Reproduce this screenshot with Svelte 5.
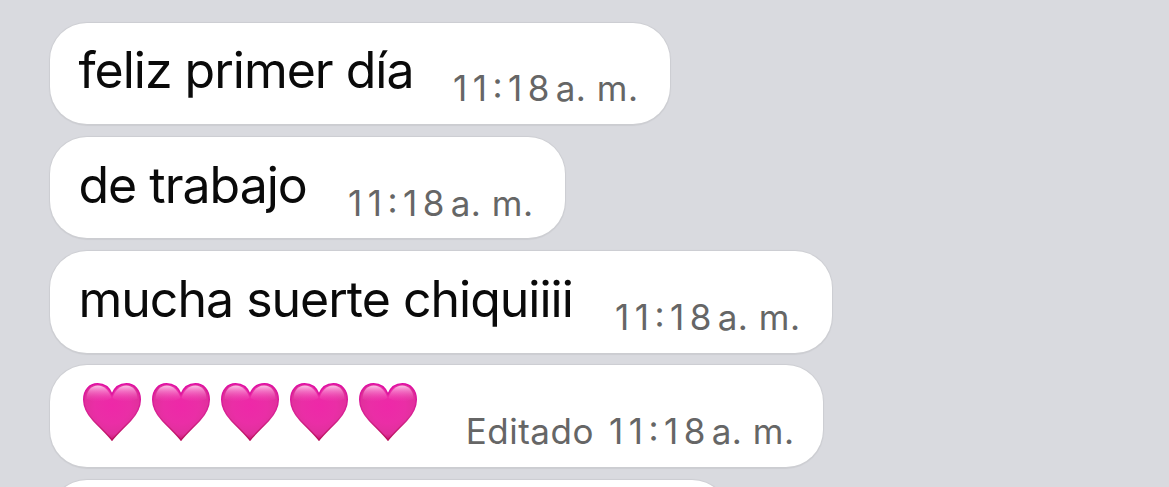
<script lang="ts">
  interface Message {
    id: number;
    text?: string;
    hearts?: number;
    edited?: boolean;
    time: string;
    period: string;
    width: number;
  }

  const messages: Message[] = [
    { id: 1, text: 'feliz primer día', time: '11:18', period: 'a. m.', width: 620 },
    { id: 2, text: 'de trabajo', time: '11:18', period: 'a. m.', width: 515 },
    { id: 3, text: 'mucha suerte chiquiiii', time: '11:18', period: 'a. m.', width: 782 },
    { id: 4, hearts: 5, edited: true, time: '11:18', period: 'a. m.', width: 773 }
  ];
</script>

<svg class="defs" aria-hidden="true">
  <defs>
    <radialGradient id="heart-fill" cx="29" cy="23" r="35" gradientUnits="userSpaceOnUse">
      <stop offset="0" stop-color="#ee28a8" />
      <stop offset="0.5" stop-color="#ea2ea6" />
      <stop offset="0.8" stop-color="#e0309c" />
      <stop offset="1" stop-color="#c4106c" />
    </radialGradient>
    <linearGradient id="heart-shine" x1="0" y1="0" x2="0" y2="1">
      <stop offset="0" stop-color="#ffdcf3" stop-opacity="0.85" />
      <stop offset="0.35" stop-color="#fa9ad8" stop-opacity="0.6" />
      <stop offset="1" stop-color="#ee50b4" stop-opacity="0" />
    </linearGradient>
    <linearGradient id="heart-edge" x1="0" y1="0" x2="0" y2="1">
      <stop offset="0" stop-color="#e00ba4" />
      <stop offset="0.6" stop-color="#d4268f" />
      <stop offset="1" stop-color="#b90f5b" />
    </linearGradient>
  </defs>
</svg>

<main class="chat">
  {#each messages as message (message.id)}
    <div class="bubble" class:edited-bubble={message.edited} style={`width: ${message.width}px`}>
      {#if message.hearts}
        <div class="hearts">
          {#each Array(message.hearts) as _}
            <svg class="heart" viewBox="0 0 58 58" role="img" aria-label="heart">
              <path
                d="M29 57.2C26.5 53.4 16 43.5 10 37C4 30.4.7 23.8.7 16.4C.7 7.2 6.4.8 14.5.8C21.5.8 26.6 5 29 11.2C31.4 5 36.5.8 43.5.8C51.6.8 57.3 7.2 57.3 16.4C57.3 23.8 54 30.4 48 37C42 43.5 31.5 53.4 29 57.2Z"
                fill="url(#heart-fill)"
                stroke="url(#heart-edge)"
                stroke-width="1.4"
              />
              <path d="M3.5 16C3.5 7.5 8.5 2.6 14.8 2.6C21.5 2.6 26 7.5 28.5 15Q16 22 3.5 16Z" fill="url(#heart-shine)" />
              <path d="M54.5 16C54.5 7.5 49.5 2.6 43.2 2.6C36.5 2.6 32 7.5 29.5 15Q42 22 54.5 16Z" fill="url(#heart-shine)" />
            </svg>
          {/each}
        </div>
      {:else}
        <span class="text">{message.text}</span>
      {/if}
      <span class="meta">
        {#if message.edited}<span class="edited">Editado</span>{/if}
        <span class="time">{message.time}</span><span class="period">{message.period}</span>
      </span>
    </div>
  {/each}
  <div class="bubble next"></div>
</main>

<style>
  :global(body) {
    background: #d9dadf;
    overflow: hidden;
  }

  .defs {
    position: absolute;
    width: 0;
    height: 0;
  }

  .chat {
    display: flex;
    flex-direction: column;
    align-items: flex-start;
    gap: 12.9px;
    height: 487px;
    box-sizing: border-box;
    padding: 22.6px 0 0 50px;
    overflow: hidden;
    font-family: Inter, 'Liberation Sans', sans-serif;
  }

  .bubble {
    display: flex;
    flex: none;
    justify-content: space-between;
    height: 101.4px;
    box-sizing: border-box;
    padding: 0 31.5px 0 28.5px;
    border-radius: 37px;
    background: #fff;
    box-shadow: 0 0.5px 1px 1px rgba(0, 0, 0, 0.06);
    white-space: nowrap;
  }

  .edited-bubble {
    padding-right: 28.5px;
  }

  .text {
    font-size: 50px;
    line-height: 60px;
    padding-top: 17.8px;
    letter-spacing: -1px;
    color: #0a0a0a;
  }

  .meta {
    display: flex;
    padding-top: 44.7px;
    font-size: 35px;
    line-height: 42px;
    color: #666;
  }

  .edited {
    margin-right: 15px;
    letter-spacing: 0.5px;
  }

  .time {
    font-feature-settings: 'case';
    letter-spacing: 5.5px;
    margin-right: 0.8px;
  }

  .period {
    letter-spacing: 0.5px;
  }

  .hearts {
    display: flex;
    gap: 11px;
    padding: 18px 0 0 4.5px;
  }

  .heart {
    width: 58px;
    height: 58px;
  }

  .next {
    width: 679px;
  }
</style>
